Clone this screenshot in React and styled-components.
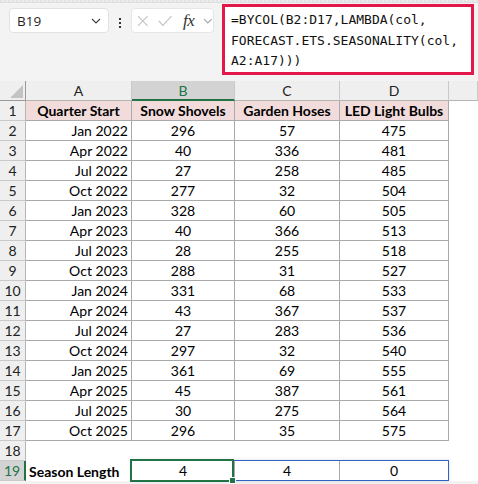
import React from "react";
import styled, { createGlobalStyle, css } from "styled-components";

const GlobalStyle = createGlobalStyle`
    body {
        margin: 0;
        background: #fff;
        font-family: Lato, "Liberation Sans", sans-serif;
        overflow: hidden;
    }
`;

const GREEN = "#217346";
const GRID = "#a9a9a9";
const HEAD_LINE = "#c9c9c9";

const rows = [
    ["Jan 2022", 296, 57, 475],
    ["Apr 2022", 40, 336, 481],
    ["Jul 2022", 27, 258, 485],
    ["Oct 2022", 277, 32, 504],
    ["Jan 2023", 328, 60, 505],
    ["Apr 2023", 40, 366, 513],
    ["Jul 2023", 28, 255, 518],
    ["Oct 2023", 288, 31, 527],
    ["Jan 2024", 331, 68, 533],
    ["Apr 2024", 43, 367, 537],
    ["Jul 2024", 27, 283, 536],
    ["Oct 2024", 297, 32, 540],
    ["Jan 2025", 361, 69, 555],
    ["Apr 2025", 45, 387, 561],
    ["Jul 2025", 30, 275, 564],
    ["Oct 2025", 296, 35, 575]
];

const Page = styled.div`
    width: 478px;
    height: 484px;
    background: #f3f3f3;
`;

const RibbonEdge = styled.div`
    height: 3px;
    background: repeating-linear-gradient(90deg, #e4e4e4 0 2px, #ececec 2px 4px);
    border-bottom: 1px solid #dedede;
    box-sizing: border-box;
`;

const FormulaBar = styled.div`
    display: flex;
    align-items: flex-start;
    height: 78px;
    padding-left: 9px;
    box-sizing: border-box;
`;

const NameBox = styled.div`
    display: flex;
    align-items: center;
    justify-content: space-between;
    width: 100px;
    height: 25px;
    margin-top: 5px;
    padding: 0 7px 0 7px;
    box-sizing: border-box;
    background: #fff;
    border: 1px solid #e2e2e2;
    border-radius: 4px;
    font-family: "Open Sans", "Noto Sans", sans-serif;
    font-size: 13.5px;
    color: #1f1f1f;
`;

const Grip = styled.div`
    display: flex;
    flex-direction: column;
    gap: 2px;
    width: 22px;
    align-items: center;
    margin-top: 15px;

    span {
        width: 2px;
        height: 2px;
        background: #333;
    }
`;

const FormulaButtons = styled.div`
    display: flex;
    align-items: center;
    width: 83px;
    height: 25px;
    margin-top: 5px;
    padding-left: 5px;
    gap: 9px;
    box-sizing: border-box;
    background: #fff;
    border: 1px solid #e6e6e6;
    border-radius: 4px;
`;

const Fx = styled.span`
    font-family: "Liberation Serif", serif;
    font-style: italic;
    font-size: 17px;
    color: #333;
    margin-left: 2px;
    letter-spacing: -0.5px;
`;

const FormulaBox = styled.div`
    width: 252px;
    height: 71px;
    margin-top: 1px;
    margin-left: 8px;
    padding: 3px 6px;
    box-sizing: border-box;
    background: #fff;
    border: 3px solid #e3184a;
    font-family: "DejaVu Sans Mono", "Liberation Mono", monospace;
    font-size: 13px;
    line-height: 20.7px;
    color: #111;
    white-space: pre;
`;

const Sheet = styled.div`
    display: grid;
    grid-template-columns: 26px 106px 103px 105px 109px 1fr;
    grid-auto-rows: 20px;
    background: #fff;
    font-size: 14px;
    color: #000;
`;

const Corner = styled.div`
    position: relative;
    background: #efefef;
    border-right: 1px solid #9a9a9a;
    border-bottom: 1px solid #9a9a9a;
    box-sizing: border-box;
    display: flex;
    align-items: flex-end;
    justify-content: flex-end;
    padding: 0 2px 2px 0;
`;

const ColHead = styled.div`
    display: flex;
    align-items: center;
    justify-content: center;
    box-sizing: border-box;
    background: #efefef;
    border-right: 1px solid ${HEAD_LINE};
    border-bottom: 1px solid #b5b5b5;
    color: #222;
    ${p =>
        p.$active &&
        css`
            background: #d3d3d3;
            color: ${GREEN};
            border-bottom: 2px solid ${GREEN};
        `}
`;

const RowHead = styled.div`
    display: flex;
    align-items: center;
    justify-content: center;
    box-sizing: border-box;
    background: #efefef;
    border-right: 1px solid #b5b5b5;
    border-bottom: 1px solid ${HEAD_LINE};
    color: #222;
    ${p =>
        p.$active &&
        css`
            background: #d3d3d3;
            color: ${GREEN};
            border-right: 2px solid ${GREEN};
        `}
`;

const Cell = styled.div`
    display: flex;
    align-items: center;
    justify-content: ${p => p.$align || "center"};
    padding: 0 3px;
    box-sizing: border-box;
    white-space: nowrap;
    font-weight: ${p => (p.$bold ? 700 : 400)};
    background: ${p => p.$fill || "transparent"};
    ${p =>
        p.$boxed &&
        css`
            border-right: 1px solid ${GRID};
            border-bottom: 1px solid ${GRID};
        `}
`;

const SpillRange = styled.div`
    grid-column: 3 / 6;
    margin: -1px 0 0 -1px;
    display: grid;
    grid-template-columns: 103px 105px 1fr;
    border: 1px solid #2e63c5;
    box-shadow: 0 0 4px rgba(0, 0, 0, 0.12);
    box-sizing: border-box;
`;

const SpillCell = styled(Cell)`
    position: relative;
    border-right: ${p => (p.$last ? "none" : `1px solid ${GRID}`)};
`;

const Selection = styled.div`
    position: absolute;
    inset: -2px 0 -2px -2px;
    border: 2px solid ${GREEN};
    pointer-events: none;
`;

const FillHandle = styled.div`
    position: absolute;
    right: -4px;
    bottom: -4px;
    width: 5px;
    height: 5px;
    background: ${GREEN};
    border: 1px solid #fff;
`;

const Chevron = ({ color }) => (
    <svg width="10" height="6" viewBox="0 0 10 6">
        <polyline points="1,1 5,5 9,1" fill="none" stroke={color} strokeWidth="1.2" />
    </svg>
);

const headers = ["Quarter Start", "Snow Shovels", "Garden Hoses", "LED Light Bulbs"];

export default function App() {
    return (
        <Page>
            <GlobalStyle />
            <RibbonEdge />
            <FormulaBar>
                <NameBox>
                    <span>B19</span>
                    <Chevron color="#444" />
                </NameBox>
                <Grip>
                    <span />
                    <span />
                    <span />
                </Grip>
                <FormulaButtons>
                    <svg width="12" height="12" viewBox="0 0 12 12">
                        <path d="M1 1 L11 11 M11 1 L1 11" stroke="#c4c4c4" strokeWidth="1.2" />
                    </svg>
                    <svg width="15" height="12" viewBox="0 0 15 12">
                        <polyline points="1,6 5,10.5 14,1" fill="none" stroke="#c4c4c4" strokeWidth="1.2" />
                    </svg>
                    <Fx>fx</Fx>
                    <Chevron color="#a8a8a8" />
                </FormulaButtons>
                <FormulaBox>
                    {"=BYCOL(B2:D17,LAMBDA(col,\nFORECAST.ETS.SEASONALITY(col,\nA2:A17)))"}
                </FormulaBox>
            </FormulaBar>

            <Sheet>
                <Corner>
                    <svg width="13" height="13" viewBox="0 0 13 13">
                        <polygon points="13,0 13,13 0,13" fill="#c3c3c3" />
                    </svg>
                </Corner>
                {["A", "B", "C", "D", ""].map((l, i) => (
                    <ColHead key={i} $active={l === "B"}>
                        {l}
                    </ColHead>
                ))}

                <RowHead>1</RowHead>
                {headers.map(h => (
                    <Cell key={h} $boxed $bold $fill="#f2dcdb">
                        {h}
                    </Cell>
                ))}
                <Cell />

                {rows.map((r, i) => (
                    <React.Fragment key={i}>
                        <RowHead>{i + 2}</RowHead>
                        <Cell $boxed $align="flex-end">
                            {r[0]}
                        </Cell>
                        <Cell $boxed>{r[1]}</Cell>
                        <Cell $boxed>{r[2]}</Cell>
                        <Cell $boxed>{r[3]}</Cell>
                        <Cell />
                    </React.Fragment>
                ))}

                <RowHead>18</RowHead>
                <Cell />
                <Cell />
                <Cell />
                <Cell />
                <Cell />

                <RowHead $active>19</RowHead>
                <Cell $bold $align="flex-start">
                    Season Length
                </Cell>
                <SpillRange>
                    <SpillCell>
                        4
                        <Selection>
                            <FillHandle />
                        </Selection>
                    </SpillCell>
                    <SpillCell>4</SpillCell>
                    <SpillCell $last>0</SpillCell>
                </SpillRange>
                <Cell />
            </Sheet>
        </Page>
    );
}
